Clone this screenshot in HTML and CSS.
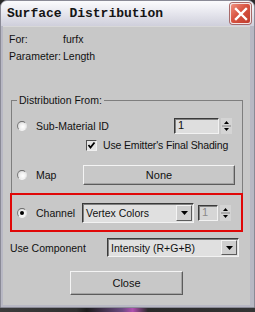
FILE: index.html
```html
<!DOCTYPE html>
<html>
<head>
<meta charset="utf-8">
<link rel="stylesheet" href="styles.css">
</head>
<body>
<div class="window">
  <div class="titlebar">
    <span class="title">Surface Distribution</span>
    <span class="xbtn">
      <svg width="14" height="14" viewBox="0 0 14 14"><path d="M2 2 L12 12 M12 2 L2 12" stroke="#fff" stroke-width="2.4" stroke-linecap="square"/></svg>
    </span>
  </div>
  <div class="body">
    <div class="info">
      <div class="info-row"><span class="key">For:</span><span>furfx</span></div>
      <div class="info-row"><span class="key">Parameter:</span><span>Length</span></div>
    </div>

    <div class="group">
      <span class="legend">Distribution From:</span>

      <div class="row row-sub">
        <span class="radio"></span>
        <span class="rlabel">Sub-Material ID</span>
        <span class="spinner spin-sub">
          <span class="field">1</span>
          <span class="arrows">
            <svg width="11" height="16" viewBox="0 0 11 16"><path d="M3 6 L5.5 3 L8 6 Z" fill="#000"/><path d="M3 10 L5.5 13 L8 10 Z" fill="#000"/><path d="M1 8 H10" stroke="#808080" stroke-width="1"/></svg>
          </span>
        </span>
      </div>

      <div class="row row-check">
        <span class="check">
          <svg width="9" height="9" viewBox="0 0 9 9"><path d="M1.5 4 L3.5 6.5 L7.5 1.5" fill="none" stroke="#000" stroke-width="1.8"/></svg>
        </span>
        <span class="clabel">Use Emitter's Final Shading</span>
      </div>

      <div class="row row-map">
        <span class="radio"></span>
        <span class="rlabel fixed">Map</span>
        <span class="button btn-none">None</span>
      </div>

      <div class="row row-channel">
        <span class="radio on"></span>
        <span class="rlabel fixed">Channel</span>
        <span class="select sel-vertex">
          <span class="sel-text">Vertex Colors</span>
          <span class="sel-btn"><svg width="7" height="4" viewBox="0 0 7 4"><path d="M0 0 H7 L3.5 4 Z" fill="#000"/></svg></span>
        </span>
        <span class="spinner spin-chan">
          <span class="field disabled">1</span>
          <span class="arrows">
            <svg width="11" height="16" viewBox="0 0 11 16"><path d="M3 6 L5.5 3 L8 6 Z" fill="#000"/><path d="M3 10 L5.5 13 L8 10 Z" fill="#000"/><path d="M1 8 H10" stroke="#808080" stroke-width="1"/></svg>
          </span>
        </span>
      </div>
    </div>

    <div class="row row-comp">
      <span class="comp-label">Use Component</span>
      <span class="select sel-comp">
        <span class="sel-text">Intensity (R+G+B)</span>
        <span class="sel-btn"><svg width="7" height="4" viewBox="0 0 7 4"><path d="M0 0 H7 L3.5 4 Z" fill="#000"/></svg></span>
      </span>
    </div>

    <div class="close-row">
      <span class="button btn-close">Close</span>
    </div>
  </div>
</div>
<div class="desktop"></div>
</body>
</html>
```

FILE: styles.css
```css
* { box-sizing: border-box; }
html, body { margin: 0; padding: 0; }
body {
  width: 255px;
  height: 312px;
  overflow: hidden;
  background: #2a2a2a;
  font-family: "Liberation Sans", Arial, sans-serif;
  font-size: 10.5px;
  color: #111;
}
.window {
  width: 255px;
  height: 308px;
  border: 1px solid #8a8a96;
  border-radius: 7px 7px 0 0;
  background: #b8b8c4;
  display: flex;
  flex-direction: column;
}
.titlebar {
  height: 25px;
  flex: none;
  border-radius: 6px 6px 0 0;
  background: linear-gradient(#fbfbfd, #ececf2 35%, #dadae4 75%, #cfcfdb);
  display: flex;
  align-items: center;
  justify-content: space-between;
  padding: 0 3px 0 6px;
}
.title {
  font-family: "Liberation Mono", monospace;
  font-weight: bold;
  font-size: 13px;
  color: #151515;
}
.xbtn {
  width: 21px;
  height: 21px;
  border-radius: 3px;
  border: 1px solid #f4e6e6;
  box-shadow: 0 0 0 1px #a86a6a;
  background: linear-gradient(135deg, #f0907e, #d85442 45%, #c03c2c);
  display: flex;
  align-items: center;
  justify-content: center;
}
.body {
  flex: 1;
  margin: 0 4px 2px 2px;
  background: #c8c8c8;
  border-top: 1px solid #d8d8d8;
  display: flex;
  flex-direction: column;
}
.info {
  padding: 4px 0 0 6px;
}
.info-row {
  line-height: 17px;
  display: flex;
}
.key { width: 54px; }

.group {
  margin: 35px 0 0 8px;
  width: 232px;
  border: 1px solid #7e7e7e;
  display: flex;
  flex-direction: column;
}
.legend {
  align-self: flex-start;
  margin: -7px 0 0 5px;
  padding: 0 2px;
  line-height: 13px;
  background: #c8c8c8;
}
.row {
  display: flex;
  align-items: center;
}
.radio {
  flex: none;
  width: 10px;
  height: 10px;
  margin-left: 5px;
  border-radius: 50%;
  border: 1px solid;
  border-color: #6c6c6c #e6e6e6 #f4f4f4 #7a7a7a;
  background: radial-gradient(circle at 60% 60%, #ffffff 0, #f0f0f0 45%, #c4c4c4 100%);
  display: flex;
  align-items: center;
  justify-content: center;
}
.radio.on::after {
  content: "";
  width: 4px;
  height: 4px;
  border-radius: 50%;
  background: #000;
}
.rlabel { margin-left: 9px; }
.rlabel.fixed { width: 46px; flex: none; }

.row-sub { height: 16px; margin-top: 11px; }
.spinner { display: flex; align-items: stretch; margin-left: auto; }
.spin-sub { margin-right: 10px; height: 16px; }
.field {
  background: #dedede;
  border: 1px solid;
  border-color: #3a3a3a #f2f2f2 #f2f2f2 #3a3a3a;
  box-shadow: inset 1px 1px 0 #808080;
  padding-left: 3px;
  line-height: 13px;
  font-size: 11px;
}
.spin-sub .field { width: 45px; }
.arrows {
  width: 11px;
  margin-left: 2px;
  background: #d4d4d4;
  display: flex;
}
.arrows svg { display: block; }

.row-check { height: 12px; margin-top: 5px; }
.check {
  width: 11px;
  height: 11px;
  margin-left: 74px;
  border: 1px solid;
  border-color: #505050 #f0f0f0 #f0f0f0 #505050;
  background: #e4e4e4;
  display: flex;
  align-items: center;
  justify-content: center;
}
.clabel { margin-left: 6px; letter-spacing: -0.15px; }

.row-map { height: 20px; margin-top: 14px; }
.button {
  display: flex;
  align-items: center;
  justify-content: center;
  background: #c8c8c8;
  border: 1px solid;
  border-color: #f4f4f4 #5c5c5c #5c5c5c #f4f4f4;
  box-shadow: inset -1px -1px 0 #a4a4a4;
}
.btn-none { width: 152px; height: 20px; margin-left: 1px; font-size: 11px; }

.row-channel {
  margin: 8px 0 -1px -2px;
  width: 233px;
  height: 39px;
  border: 2px solid #e00808;
}
.row-channel .radio { margin-left: 5px; }
.select {
  display: flex;
  align-items: center;
  background: #e0e0e0;
  border: 1px solid;
  border-color: #3a3a3a #f2f2f2 #f2f2f2 #3a3a3a;
  box-shadow: inset 1px 1px 0 #808080;
  padding: 1px;
}
.sel-text { flex: 1; padding-left: 2px; font-size: 10.5px; }
.sel-btn {
  width: 16px;
  height: 100%;
  background: #cfcfcf;
  border: 1px solid;
  border-color: #f4f4f4 #5c5c5c #5c5c5c #f4f4f4;
  display: flex;
  align-items: center;
  justify-content: center;
}
.sel-vertex { width: 112px; height: 20px; }
.spin-chan { margin-left: 4px; margin-right: 0; height: 16px; }
.spin-chan .field { width: 20px; }
.field.disabled { color: #8a8a8a; background: #d6d6d6; }

.row-comp { height: 19px; margin-top: 6px; }
.comp-label { width: 104px; padding-left: 7px; flex: none; }
.sel-comp { width: 132px; height: 19px; }

.close-row {
  display: flex;
  justify-content: center;
  margin-top: 14px;
}
.btn-close { width: 113px; height: 24px; font-size: 11px; }

.desktop {
  height: 4px;
  background: linear-gradient(to right, #3c3c3c 0, #303030 30%, #1c1c1c 34%, #6a4a80 48%, #b050b0 52%, #2a2a2a 58%, #343434 100%);
}
```
